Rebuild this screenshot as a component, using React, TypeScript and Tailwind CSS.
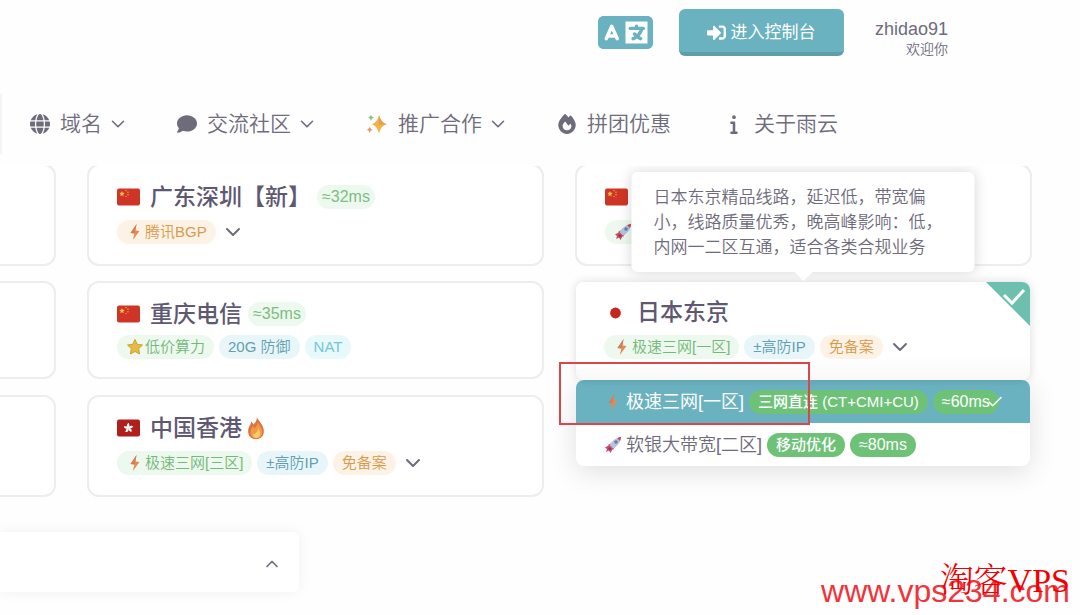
import React from 'react';
import { Check, ChevronDown, ChevronUp } from 'lucide-react';
import { FaSignInAlt } from 'react-icons/fa';
import { FaComment, FaFire, FaGlobe, FaInfo, FaLanguage } from 'react-icons/fa6';

type Tone = 'green' | 'blue' | 'cyan' | 'orange';

interface Tag {
  text: string;
  tone: Tone;
  icon?: React.ReactNode;
}

interface Region {
  name: string;
  flag: React.ReactNode;
  suffix?: React.ReactNode;
  ping?: string;
  tags: Tag[];
  expandable?: boolean;
}

const tones: Record<Tone, string> = {
  green: 'bg-[#edf9ee] text-[#74b87a]',
  blue: 'bg-[#e9f6f9] text-[#629fb3]',
  cyan: 'bg-[#e8f9fc] text-[#76c6da]',
  orange: 'bg-[#fdf2e6] text-[#d99a4c]',
};

const Bolt = () => (
  <svg viewBox="0 0 18 18" className="size-[18px] shrink-0" aria-hidden="true">
    <path d="M10.6 1 4.500 10l4 .5L6.800 17 13.500 8l-4-.600z" fill="#e58a4e" />
    <path d="M10.6 1 4.500 10l4 .5.6-2.900z" fill="#d97a5c" />
  </svg>
);

const Star = () => (
  <svg viewBox="0 0 18 18" className="size-[18px] shrink-0" aria-hidden="true">
    <path
      d="m9 1.5 2.3 4.8 5.2.7-3.8 3.7.9 5.3L9 13.500 4.400 16l.9-5.300L1.500 7l5.200-.7z"
      fill="#e3bb45"
      stroke="#cfa135"
      strokeWidth="1"
      strokeLinejoin="round"
    />
  </svg>
);

const Rocket = () => (
  <svg viewBox="0 0 18 18" className="size-[18px] shrink-0" aria-hidden="true">
    <path d="M4.500 8.500 8 7l-3 5zM9.500 13.500l1.500-3.500-5 3z" fill="#c2405c" />
    <path d="M5 10c2-4.500 6.500-8 12.300-9.300C16.500 6.500 13 11 8.200 13z" fill="#b7c3dc" />
    <path d="M13.200 2.200c1.300-.7 2.700-1.200 4.100-1.500-.2 1.500-.7 2.900-1.400 4.200z" fill="#d2475f" />
    <circle cx="12" cy="6" r="1.700" fill="#5b7fae" />
    <path d="M1 11.500 5.500 9l3.500 3.500L6.500 17 5 14.500l-3 1.500 1-3z" fill="#cc4a63" />
    <path d="m4 12.500 2-1 1 1-1 2z" fill="#7d3566" />
  </svg>
);

const Sparkles = () => (
  <svg viewBox="0 0 22 22" className="size-[22px] shrink-0" aria-hidden="true">
    <path d="M13 2c1.400 5 3.200 7.900 8 9.300-4.800 1.400-6.600 4.200-8 9.200-1.400-5-3-7.800-7.500-9.200C10 9.900 11.600 7 13 2z" fill="#f0b545" />
    <path d="M13 2c1.400 5 3.200 7.900 8 9.300l-8 .7z" fill="#e59a58" />
    <path d="M5 1.500c.6 2 1.200 2.600 3 3.200C6.200 5.300 5.600 6 5 8c-.6-2-1.200-2.700-3-3.300C3.800 4.100 4.400 3.500 5 1.500z" fill="#93c08a" />
    <path d="M3.700 13.500c.6 2 1.200 2.600 3 3.200-1.800.6-2.400 1.300-3 3.300-.6-2-1.200-2.700-3-3.300 1.800-.6 2.400-1.200 3-3.200z" fill="#e39a6a" />
  </svg>
);

const Flame = () => (
  <svg viewBox="0 0 20 26" className="h-6 w-5 shrink-0" aria-hidden="true">
    <path d="M11 1c1 4 7.500 8 7.500 15.500C18.500 22 15 25 10 25S1.500 22 1.500 16.500C1.500 12 4 10.500 5 6c1 1 1.700 2 2 3.200C9.500 7.500 11 4.500 11 1z" fill="#df7040" />
    <path d="M12 6c.5 3.500 4.800 6 4.800 11 0 4.500-2.500 7-6.300 7S4 21.500 4 17.500c0-3 1.700-4.500 2.500-7 1 1 1.200 2 1.300 3C10 12 12 9.500 12 6z" fill="#f09a45" />
    <path d="M12.500 13c.3 2 2.200 3 2.200 6 0 3-1.700 4.700-4.400 4.700S6.500 22 6.500 19.500c2.500.5 5.500-2.500 6-6.500z" fill="#f8cc65" />
  </svg>
);

const ChinaFlag = () => (
  <svg viewBox="0 0 24 18" className="h-[18px] w-6 shrink-0" aria-hidden="true">
    <rect y=".5" width="23" height="17" rx="2" fill="#cf3527" />
    <path d="m5 3 .8 1.800 2 .2-1.500 1.300.4 2L5 7.300l-1.700 1 .4-2L2.200 5l2-.2z" fill="#f3bf49" />
    <g fill="#eeb044">
      <circle cx="9" cy="2.500" r=".7" />
      <circle cx="11" cy="4.300" r=".7" />
      <circle cx="11" cy="6.800" r=".7" />
      <circle cx="9" cy="8.600" r=".7" />
    </g>
  </svg>
);

const HongKongFlag = () => (
  <svg viewBox="0 0 24 18" className="h-[18px] w-6 shrink-0" aria-hidden="true">
    <rect y=".5" width="23" height="17" rx="2" fill="#b01f1b" />
    <g fill="#fff">
      {[0, 72, 144, 216, 288].map((angle) => (
        <path
          key={angle}
          d="M11.500 9C9.300 7.500 9.500 4.700 12 4c-.4 1.500 1.600 2.500-.5 5z"
          transform={`rotate(${angle} 11.500 9)`}
        />
      ))}
    </g>
  </svg>
);

const JapanFlag = () => (
  <svg viewBox="0 0 24 18" className="h-[18px] w-6 shrink-0" aria-hidden="true">
    <rect y=".5" width="23" height="17" rx="2" fill="#fff" />
    <circle cx="11.500" cy="10" r="5.400" fill="#c4281b" />
  </svg>
);

const navItems = [
  { label: '域名', icon: <FaGlobe className="size-5" />, menu: true },
  { label: '交流社区', icon: <FaComment className="size-5" />, menu: true },
  { label: '推广合作', icon: <Sparkles />, menu: true },
  { label: '拼团优惠', icon: <FaFire className="size-5" />, menu: false },
  { label: '关于雨云', icon: <FaInfo className="size-5" />, menu: false },
];

const shenzhen: Region = {
  name: '广东深圳【新】',
  flag: <ChinaFlag />,
  ping: '≈32ms',
  tags: [{ text: '腾讯BGP', tone: 'orange', icon: <Bolt /> }],
  expandable: true,
};

const chongqing: Region = {
  name: '重庆电信',
  flag: <ChinaFlag />,
  ping: '≈35ms',
  tags: [
    { text: '低价算力', tone: 'green', icon: <Star /> },
    { text: '20G 防御', tone: 'blue' },
    { text: 'NAT', tone: 'cyan' },
  ],
};

const hongkong: Region = {
  name: '中国香港',
  flag: <HongKongFlag />,
  suffix: <Flame />,
  tags: [
    { text: '极速三网[三区]', tone: 'green', icon: <Bolt /> },
    { text: '±高防IP', tone: 'blue' },
    { text: '免备案', tone: 'orange' },
  ],
  expandable: true,
};

const tokyo: Region = {
  name: '日本东京',
  flag: <JapanFlag />,
  tags: [
    { text: '极速三网[一区]', tone: 'green', icon: <Bolt /> },
    { text: '±高防IP', tone: 'blue' },
    { text: '免备案', tone: 'orange' },
  ],
  expandable: true,
};

const RegionInfo: React.FC<{ region: Region }> = ({ region }) => (
  <>
    <div className="flex h-[34px] items-center">
      {region.flag}
      <h3 className="ml-[9px] text-[23px] font-medium whitespace-nowrap text-[#5e5873]">{region.name}</h3>
      {region.suffix && <span className="ml-1">{region.suffix}</span>}
      {region.ping && (
        <span className="ml-1.5 h-6 rounded-full bg-[#edf9ee] px-[5px] text-base leading-6 text-[#7dbd82]">{region.ping}</span>
      )}
    </div>
    <div className="mt-1 flex items-center gap-[5px]">
      {region.tags.map((tag) => (
        <span
          key={tag.text}
          className={`flex h-6 items-center gap-px rounded-full px-[9px] text-[15px] font-[350] whitespace-nowrap ${tones[tag.tone]}`}
        >
          {tag.icon}
          {tag.text}
        </span>
      ))}
      {region.expandable && (
        <button type="button" aria-label="展开" className="flex h-7 items-center text-[#6e6b7b]">
          <ChevronDown className="size-6" strokeWidth={2} />
        </button>
      )}
    </div>
  </>
);

const RegionCard: React.FC<{ region: Region }> = ({ region }) => (
  <article className="rounded-xl border-2 border-[#ededed] bg-white px-7 pt-3.5 pb-[18px]">
    <RegionInfo region={region} />
  </article>
);

const LinePill: React.FC<{ large?: boolean; children: React.ReactNode }> = ({ large, children }) => (
  <span
    className={`h-6 rounded-full bg-[#6dc278] px-[9px] leading-6 font-medium whitespace-nowrap text-white ${
      large ? 'text-base' : 'text-[15px]'
    }`}
  >
    {children}
  </span>
);

const SelectedRegion = () => (
  <article className="relative z-10 mt-px mr-0.5 ml-px">
    <div className="relative z-10 rounded-lg bg-linear-to-b from-white from-75% to-[#f8f8f8] px-7 pt-[13px] pb-[19px] shadow-[0_0_10px_rgba(0,0,0,0.14)]">
      <RegionInfo region={tokyo} />
      <svg viewBox="0 0 44 44" className="absolute top-0 right-0 size-11" aria-hidden="true">
        <path d="M0 0h36a8 8 0 0 1 8 8v36z" fill="#6cc0ad" />
        <path d="m18 13 8 8L38 8" fill="none" stroke="#fff" strokeWidth="3" />
      </svg>
    </div>

    <div
      role="tooltip"
      className="absolute bottom-full left-1/2 z-20 mb-2.5 w-[343px] -translate-x-1/2 rounded-md bg-white px-[22px] pt-[13px] pb-3 text-[17px] leading-[25px] font-[350] text-[#6e6b7b] shadow-[0_0_14px_rgba(0,0,0,0.16)]"
    >
      日本东京精品线路，延迟低，带宽偏小，线路质量优秀，晚高峰影响：低，内网一二区互通，适合各类合规业务
      <svg viewBox="0 0 18 9" className="absolute top-full left-1/2 h-[9px] w-[18px] -translate-x-1/2" aria-hidden="true">
        <path d="M0 0h18L9 9z" fill="#fff" />
      </svg>
    </div>

    <div className="absolute inset-x-0 top-full overflow-hidden rounded-lg bg-white text-lg shadow-[0_6px_28px_rgba(0,0,0,0.12)]">
      <button type="button" className="relative flex h-[43px] w-full items-center bg-[#6bb2c0] pl-7 text-white">
        <Bolt />
        <span className="mr-[5px] ml-1">极速三网[一区]</span>
        <span className="flex gap-[5px]">
          <LinePill>三网直连 (CT+CMI+CU)</LinePill>
          <LinePill large>≈60ms</LinePill>
        </span>
        <Check className="absolute right-[26px] size-[18px]" strokeWidth={2} />
      </button>
      <button type="button" className="flex h-[43px] w-full items-center pl-7 text-[#6e6b7b]">
        <Rocket />
        <span className="mr-[5px] ml-1 font-[350]">软银大带宽[二区]</span>
        <span className="flex gap-[5px]">
          <LinePill>移动优化</LinePill>
          <LinePill large>≈80ms</LinePill>
        </span>
      </button>
    </div>

    <div className="pointer-events-none absolute top-20 -left-[17px] z-20 h-[63px] w-[251px] border-2 border-[#d9464b]" />
  </article>
);

const EdgeCard: React.FC<{ short?: boolean }> = ({ short }) => (
  <div className={`rounded-r-xl border-2 border-l-0 border-[#ededed] bg-white ${short ? 'h-[98px]' : 'h-[102px]'}`} />
);

export default function App() {
  return (
    <div className="relative min-h-screen overflow-hidden bg-[#fefefe] font-['Liberation_Sans','Noto_Sans_CJK_SC',sans-serif] text-[#6e6b7b]">
      <header className="flex h-[94px] items-start justify-end pt-[9px] pr-[132px]">
        <button type="button" aria-label="语言" className="mr-[26px] flex h-[46px] items-center text-[#6bb2c0]">
          <FaLanguage className="size-[55px]" />
        </button>
        <button
          type="button"
          className="flex h-[47px] w-[165px] items-center justify-center gap-1 rounded-md border-b-4 border-[#5f9dab] bg-[#6bb2c0] pt-1 text-[17px] text-white"
        >
          <FaSignInAlt className="size-[19px]" />
          进入控制台
        </button>
        <div className="ml-[31px] pt-2 text-right">
          <p className="text-lg leading-6">zhidao91</p>
          <p className="text-sm leading-4 font-[350]">欢迎你</p>
        </div>
      </header>

      <nav className="flex h-[60px] items-center gap-12 border-l-2 border-[#f4f4f4] pl-7">
        {navItems.map((item) => (
          <a key={item.label} href="#" className="flex shrink-0 items-center text-[21px] font-[350]">
            {item.icon}
            <span className="mr-[5px] ml-2.5">{item.label}</span>
            {item.menu && <ChevronDown className="size-[22px]" strokeWidth={1.75} />}
          </a>
        ))}
      </nav>

      <main className="mt-3 overflow-hidden pb-5">
        <section className="-mt-0.5 grid grid-cols-[56px_1fr_1fr] items-start gap-x-[31px] gap-y-[15px] pr-12">
          <EdgeCard />
          <RegionCard region={shenzhen} />
          <article className="rounded-xl border-2 border-[#ededed] bg-white px-7 pt-3.5 pb-[18px]">
            <div className="flex h-[34px] items-center">
              <ChinaFlag />
            </div>
            <div className="mt-1 flex h-7 items-center">
              <span className="flex h-6 w-24 items-center rounded-full bg-[#edf9ee] px-[9px]">
                <Rocket />
              </span>
            </div>
          </article>

          <EdgeCard short />
          <RegionCard region={chongqing} />
          <SelectedRegion />

          <EdgeCard />
          <RegionCard region={hongkong} />
        </section>

        <button
          type="button"
          aria-label="收起"
          className="mt-[35px] flex h-[60px] w-[299px] items-center justify-end rounded-r-md bg-white pt-1 pr-[17px] shadow-[0_0_14px_rgba(0,0,0,0.06)]"
        >
          <ChevronUp className="size-5" strokeWidth={2} />
        </button>
      </main>

      <div className="pointer-events-none absolute right-2.5 bottom-1.5 text-[32px] leading-9 text-[#f0343c]">www.vps234.com</div>
      <div className="pointer-events-none absolute right-2.5 bottom-3.5 font-['Liberation_Serif','Noto_Serif_CJK_SC','Noto_Sans_CJK_SC',serif] text-[34px] leading-10 font-light text-[#f00000]">
        淘客VPS
      </div>
    </div>
  );
}
